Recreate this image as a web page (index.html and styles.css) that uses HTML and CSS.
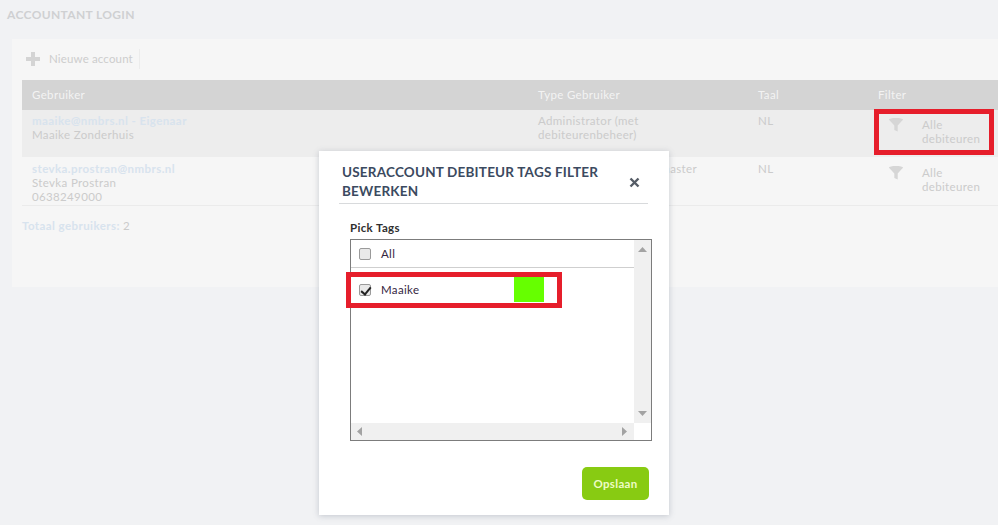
FILE: index.html
```html
<!DOCTYPE html>
<html lang="nl">
<head>
<meta charset="utf-8">
<title>Accountant login</title>
<link rel="stylesheet" href="styles.css">
</head>
<body>
<main class="page">
  <h1 class="page-title">ACCOUNTANT LOGIN</h1>
  <section class="card">
    <div class="toolbar">
      <svg class="plus" width="14" height="14" viewBox="0 0 14 14"><path d="M5 0h4v5h5v4H9v5H5V9H0V5h5z"/></svg>
      <span class="toolbar-label">Nieuwe account</span>
    </div>
    <div class="table">
      <div class="row head">
        <div>Gebruiker</div><div>Type Gebruiker</div><div>Taal</div><div>Filter</div>
      </div>
      <div class="row selected">
        <div><span class="link">maaike@nmbrs.nl - Eigenaar</span><br>Maaike Zonderhuis</div>
        <div>Administrator (met<br>debiteurenbeheer)</div>
        <div>NL</div>
        <div class="filter">
          <svg class="funnel" width="14" height="14" viewBox="0 0 14 14"><path d="M0 1.6C0 .7 3.1 0 7 0s7 .7 7 1.6c0 .3-.2.5-.5.7L8.700 7.500v6L5.300 12V7.500L.5 2.300C.2 2.100 0 1.900 0 1.600z"/></svg>
          <span>Alle<br>debiteuren</span>
        </div>
      </div>
      <div class="row plain">
        <div><span class="link">stevka.prostran@nmbrs.nl</span><br>Stevka Prostran<br>0638249000</div>
        <div>Administrator account master</div>
        <div>NL</div>
        <div class="filter">
          <svg class="funnel" width="14" height="14" viewBox="0 0 14 14"><path d="M0 1.6C0 .7 3.1 0 7 0s7 .7 7 1.6c0 .3-.2.5-.5.7L8.700 7.500v6L5.300 12V7.500L.5 2.300C.2 2.100 0 1.900 0 1.600z"/></svg>
          <span>Alle<br>debiteuren</span>
        </div>
      </div>
    </div>
    <p class="total"><span class="link">Totaal gebruikers:</span> 2</p>
  </section>
</main>

<div class="mark mark-filter"></div>

<aside class="modal">
  <header class="modal-head">
    <h2>USERACCOUNT DEBITEUR TAGS FILTER BEWERKEN</h2>
    <svg class="close" width="11" height="11" viewBox="0 0 11 11"><path d="M1.500 1.500l8 8M9.500 1.500l-8 8"/></svg>
  </header>
  <div class="modal-body">
    <div class="pick-label">Pick Tags</div>
    <div class="listbox">
      <div class="list-content">
        <label class="item item-all"><input type="checkbox"><span>All</span></label>
        <label class="item item-tag"><input type="checkbox" checked><span>Maaike</span><i class="swatch"></i></label>
      </div>
      <div class="scroll-v">
        <svg width="9" height="5" viewBox="0 0 9 5"><path d="M4.500 0L9 5H0z"/></svg>
        <svg width="9" height="5" viewBox="0 0 9 5"><path d="M0 0h9L4.500 5z"/></svg>
      </div>
      <div class="scroll-h">
        <svg width="5" height="9" viewBox="0 0 5 9"><path d="M5 0v9L0 4.500z"/></svg>
        <svg width="5" height="9" viewBox="0 0 5 9"><path d="M0 0l5 4.500L0 9z"/></svg>
      </div>
    </div>
    <div class="mark mark-tag"></div>
  </div>
  <footer class="modal-foot"><button class="save" type="button">Opslaan</button></footer>
</aside>
</body>
</html>
```

FILE: styles.css
```css
* { box-sizing: border-box; }
html, body { margin: 0; height: 100%; }
body {
  width: 998px;
  height: 525px;
  overflow: hidden;
  background: #f1f2f4;
  font-family: "Lato", "Noto Sans", sans-serif;
  font-size: 11.5px;
  letter-spacing: 0.35px;
  color: #cbcbcb;
  position: relative;
}
.page { padding: 8px 0 0 7px; }
.page-title {
  margin: 0 0 17px;
  font-size: 12px;
  line-height: 14px;
  font-weight: 700;
  letter-spacing: 0.35px;
  color: #cfd0d2;
}
.card {
  margin-left: 5px;
  width: 986px;
  height: 248px;
  background: #f6f6f6;
  padding: 0 0 0 10px;
}
.toolbar {
  height: 41px;
  display: flex;
  align-items: center;
  padding: 0 0 2px 4px;
}
.plus { fill: #d4d4d4; margin-right: 9px; }
.toolbar-label {
  padding-right: 6px;
  line-height: 20px;
  letter-spacing: 0.15px;
  border-right: 1px solid #ececec;
  color: #cdcdcd;
}
.row {
  display: grid;
  grid-template-columns: 506px 220px 120px 1fr;
  padding-left: 10px;
  line-height: 14px;
}
.head {
  height: 30px;
  align-items: center;
  background: #d4d4d4;
  color: #f3f3f3;
}
.selected { height: 47px; padding-top: 4px; background: #ededed; }
.plain { height: 49px; padding-top: 5px; border-bottom: 1px solid #ebebeb; }
.link { color: #d8e3ee; font-weight: 700; letter-spacing: 0.42px; }
.filter { display: flex; padding-left: 11px; }
.funnel { fill: #d6d6d6; margin: 4px 19px 0 0; flex: none; }
.filter span { padding-top: 4px; }
.total { margin: 13px 0 0; line-height: 14px; }

.modal {
  position: absolute;
  left: 319px;
  top: 151px;
  width: 350px;
  height: 364px;
  background: #fff;
  box-shadow: 0 1px 6px rgba(90, 100, 120, .3);
  color: #333;
}
.modal-head {
  margin: 0 21px 0 20px;
  height: 53px;
  padding: 12px 0 0 3px;
  border-bottom: 1px solid #d8dadc;
  display: flex;
  justify-content: space-between;
}
.modal-head h2 {
  margin: 0;
  width: 275px;
  font-size: 13.5px;
  line-height: 19px;
  font-weight: 700;
  letter-spacing: 0.2px;
  color: #3b4a60;
}
.close { fill: none; stroke: #555c66; stroke-width: 2.4; margin: 14px 8px 0 0; }
.modal-body { position: relative; padding: 17px 17px 0 31px; }
.pick-label {
  font-weight: 700;
  line-height: 14px;
  color: #2f2f2f;
  margin-bottom: 4px;
}
.listbox {
  position: relative;
  width: 302px;
  height: 202px;
  border: 1px solid #7c7c7c;
  background: #fff;
}
.list-content { width: 283px; }
.item {
  display: flex;
  align-items: center;
  padding-left: 8px;
  color: #35263f;
  font-size: 11.5px;
}
.item input {
  appearance: none;
  position: relative;
  width: 12px;
  height: 12px;
  margin: 0 10px 0 0;
  border: 1px solid #9a9a9a;
  border-radius: 2px;
  background: #e9e9e9;
}
.item input:checked::after {
  content: "";
  position: absolute;
  left: 3px;
  top: 0;
  width: 4px;
  height: 8px;
  border: solid #222;
  border-width: 0 2px 2px 0;
  transform: rotate(40deg);
}
.item-all { height: 28px; border-bottom: 1px solid #cfcfcf; }
.item-tag { height: 42px; padding-top: 15px; padding-bottom: 14px; }
.item-tag span { width: 133px; }
.swatch { width: 30px; height: 25px; background: #66ff00; flex: none; }
.scroll-v {
  position: absolute;
  right: 0;
  top: 0;
  bottom: 17px;
  width: 17px;
  background: #f0f0f0;
  display: flex;
  flex-direction: column;
  justify-content: space-between;
  align-items: center;
  padding: 7px 0;
}
.scroll-h {
  position: absolute;
  left: 0;
  right: 17px;
  bottom: 0;
  height: 17px;
  background: #f0f0f0;
  display: flex;
  justify-content: space-between;
  align-items: center;
  padding: 0 7px 0 6px;
}
.scroll-v path, .scroll-h path { fill: #a3a3a3; }
.modal-foot { display: flex; justify-content: flex-end; padding: 26px 20px 0 0; }
.save {
  width: 67px;
  height: 33px;
  border: 0;
  border-radius: 5px;
  background: #88cb12;
  color: #eefcc5;
  font: 700 11.5px "Lato", "Noto Sans", sans-serif;
  letter-spacing: 0.3px;
}
.mark { position: absolute; border: 5px solid #e61e2b; pointer-events: none; }
.mark-filter { left: 874px; top: 109px; width: 120px; height: 46px; }
.mark-tag { left: 27px; top: 68px; width: 216px; height: 36px; }
```
